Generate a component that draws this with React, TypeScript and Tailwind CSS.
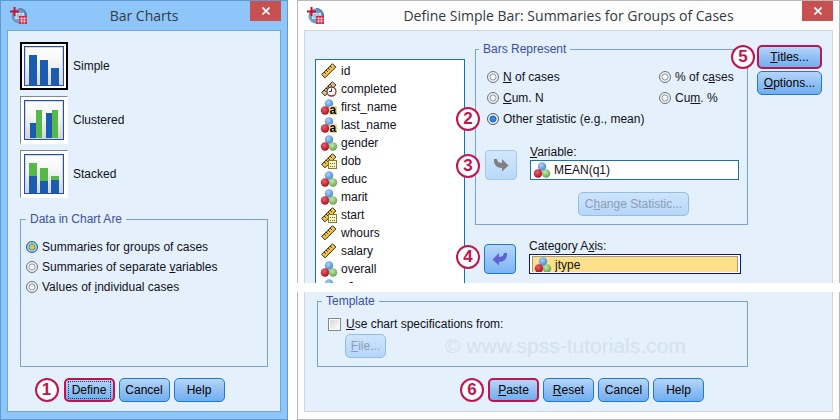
import React from 'react';
import { clsx } from 'clsx';

type VarKind = 'scale' | 'time' | 'string' | 'nominal' | 'date';

const variables: { name: string; kind: VarKind }[] = [
  { name: 'id', kind: 'scale' },
  { name: 'completed', kind: 'time' },
  { name: 'first_name', kind: 'string' },
  { name: 'last_name', kind: 'string' },
  { name: 'gender', kind: 'nominal' },
  { name: 'dob', kind: 'date' },
  { name: 'educ', kind: 'nominal' },
  { name: 'marit', kind: 'nominal' },
  { name: 'start', kind: 'date' },
  { name: 'whours', kind: 'scale' },
  { name: 'salary', kind: 'scale' },
  { name: 'overall', kind: 'nominal' },
  { name: 'q2', kind: 'nominal' },
];

function Ruler({ pale }: { pale?: boolean }) {
  return (
    <g>
      <path d="M.7 11.500 L11.500 .7 L14.800 4 L4 14.800 Z" fill={pale ? '#cfd08a' : '#f5c443'} stroke="#2e2817" strokeWidth="1" />
      <path d="M3 9l1.800 1.800M5 7l1.800 1.800M7 5l1.800 1.800M9 3l1.800 1.800" stroke="#2e2817" strokeWidth="1" />
    </g>
  );
}

function VarIcon({ kind }: { kind: VarKind }) {
  const balls = kind === 'nominal' || kind === 'string';
  return (
    <svg width="16" height="16" viewBox="0 0 16 16" className="shrink-0 overflow-visible" aria-hidden="true">
      <defs>
        <radialGradient id="ballBlue" cx="40%" cy="35%" r="65%">
          <stop offset="0" stopColor="#a9d3fb" />
          <stop offset="1" stopColor="#4a87cc" />
        </radialGradient>
        <radialGradient id="ballRed" cx="40%" cy="35%" r="65%">
          <stop offset="0" stopColor="#f0606c" />
          <stop offset="1" stopColor="#a80f22" />
        </radialGradient>
        <radialGradient id="ballGreen" cx="40%" cy="35%" r="65%">
          <stop offset="0" stopColor="#c4ecaa" />
          <stop offset="1" stopColor="#62a552" />
        </radialGradient>
      </defs>
      {!balls && <Ruler pale={kind === 'time'} />}
      {balls && (
        <g>
          <circle cx="8" cy="4.500" r="4.200" fill="url(#ballBlue)" />
          <circle cx="4" cy="11.500" r="4.200" fill="url(#ballRed)" />
          {kind === 'nominal' && <circle cx="12" cy="11.500" r="4.200" fill="url(#ballGreen)" />}
        </g>
      )}
      {kind === 'string' && (
        <g>
          <rect x="8.500" y="7" width="7.500" height="9" fill="#fbd77a" />
          <text x="8.500" y="15" fontSize="12" fontWeight="bold" fontFamily="Liberation Sans, Arial, sans-serif">a</text>
        </g>
      )}
      {kind === 'time' && (
        <g>
          <circle cx="10.500" cy="10.500" r="4.500" fill="#fff" stroke="#8f2f35" strokeWidth="1.300" />
          <path d="M10.500 7.500v3h-2.500" fill="none" stroke="#333" />
        </g>
      )}
      {kind === 'date' && (
        <g>
          <rect x="7.500" y="7.500" width="8" height="8" fill="#fff7b8" stroke="#8a7a3a" />
          <path d="M9 10.500h5M9 13.500h5" stroke="#6e6230" strokeDasharray="1 1" />
        </g>
      )}
    </svg>
  );
}

function AppIcon() {
  return (
    <svg width="18" height="18" viewBox="0 0 18 18" aria-hidden="true">
      <circle cx="9" cy="9" r="7.500" fill="#6d9cc9" />
      <path d="M9 1.500a7.500 7.500 0 0 1 7.500 7.500" fill="none" stroke="#3f6f9f" strokeWidth="1.200" />
      <path d="M5 6h9v6H5z" fill="#e8f1f8" />
      <path d="M5 8h9M5 10h9M8 6v6M11 6v6" stroke="#7fa3c4" strokeWidth=".8" />
      <path d="M4.500 0v9M0 4.500h9" stroke="#c8102e" strokeWidth="2" />
      <rect x="9" y="9" width="8" height="8" fill="#d42a49" />
      <path d="M9.500 11.500h7M9.500 14h7M11.700 10v6.500M14.300 10v6.500" stroke="#fbd3da" strokeWidth=".8" />
    </svg>
  );
}

function ArrowIcon({ left, fill }: { left?: boolean; fill: string }) {
  return (
    <svg width="16" height="14" viewBox="0 0 16 14" aria-hidden="true">
      <path
        d="M1 1 H4 C4.500 4 6 5 9 5 V1 L15.500 7.500 L9 13.500 V10 C4 10 .5 7 1 1 Z"
        fill={fill}
        transform={left ? 'translate(16 0) scale(-1 1)' : undefined}
      />
    </svg>
  );
}

function ChartIcon({ bars }: { bars: { x: number; y: number; w: number; h: number; fill: string }[] }) {
  return (
    <svg width="40" height="40" viewBox="0 0 40 40" aria-hidden="true">
      <defs>
        <linearGradient id="chartBg" x1="0" y1="0" x2="0" y2="1">
          <stop offset="0" stopColor="#ffffff" />
          <stop offset=".4" stopColor="#f6f6f6" />
          <stop offset="1" stopColor="#cfd3d8" />
        </linearGradient>
      </defs>
      <rect x=".5" y=".5" width="39" height="39" fill="url(#chartBg)" stroke="#2b4fa0" />
      <rect x="1.500" y="1.500" width="37" height="37" fill="none" stroke="#c9d6f6" />
      {bars.map((b, i) => (
        <rect key={i} x={b.x} y={b.y} width={b.w} height={b.h} fill={b.fill} />
      ))}
    </svg>
  );
}

const BLUE = '#1c5cb0';
const GREEN = '#56b848';

const chartTypes = [
  {
    label: 'Simple',
    bars: [
      { x: 5, y: 9, w: 8, h: 30, fill: BLUE },
      { x: 16, y: 14, w: 8, h: 25, fill: BLUE },
      { x: 27, y: 22, w: 8, h: 17, fill: BLUE },
    ],
  },
  {
    label: 'Clustered',
    bars: [
      { x: 6, y: 23, w: 6, h: 15, fill: BLUE },
      { x: 12, y: 10, w: 6, h: 28, fill: GREEN },
      { x: 22, y: 13, w: 6, h: 25, fill: BLUE },
      { x: 28, y: 10, w: 6, h: 28, fill: GREEN },
    ],
  },
  {
    label: 'Stacked',
    bars: [
      { x: 5, y: 9, w: 8, h: 13, fill: GREEN },
      { x: 5, y: 22, w: 8, h: 17, fill: BLUE },
      { x: 16, y: 14, w: 8, h: 13, fill: GREEN },
      { x: 16, y: 27, w: 8, h: 12, fill: BLUE },
      { x: 27, y: 22, w: 8, h: 4, fill: GREEN },
      { x: 27, y: 26, w: 8, h: 13, fill: BLUE },
    ],
  },
];

function Badge({ n, className }: { n: number; className: string }) {
  return (
    <span
      className={clsx(
        'absolute flex size-6 items-center justify-center rounded-full border-2 border-[#c2134f] bg-white text-[17px] leading-5 font-bold text-[#c2134f]',
        className
      )}
    >
      {n}
    </span>
  );
}

function Button({ children, marked, className, disabled }: { children: React.ReactNode; marked?: boolean; className?: string; disabled?: boolean }) {
  return (
    <button
      type="button"
      disabled={disabled}
      className={clsx(
        'flex h-6 items-center justify-center rounded-[5px] whitespace-nowrap',
        disabled
          ? 'border border-[#93bde6] bg-linear-to-b from-[#cfe4fb] to-[#b5d7fa] text-[#8c9eb4]'
          : 'bg-linear-to-b from-[#b4d5fa] via-[#93c0f3] to-[#6eaef0] text-black',
        !disabled && (marked ? 'border-2 border-[#c2134f]' : 'border border-[#2279cc]'),
        className
      )}
    >
      {children}
    </button>
  );
}

function Radio({ name, children, checked, gold }: { name: string; children: React.ReactNode; checked?: boolean; gold?: boolean }) {
  return (
    <label className="flex items-center gap-1 whitespace-nowrap">
      <input
        type="radio"
        name={name}
        defaultChecked={checked}
        className={clsx(
          'size-3 shrink-0 appearance-none rounded-full border',
          !checked && 'border-[#6f757d] bg-[radial-gradient(circle,#f7fafd_2px,#8d949c_3px,#ffffff_4px,#dfe6ee_5px)]',
          checked && gold && 'border-[#1f5f9f] bg-[radial-gradient(circle,#d8cf4a_2px,#5b8a7a_3px,#b9dcf8_4px,#8fbfe8_5px)]',
          checked && !gold && 'border-[#4d5a68] bg-[radial-gradient(circle,#2f86e4_2px,#1c62b4_3px,#ffffff_4px,#dfe6ee_5px)]'
        )}
      />
      <span>{children}</span>
    </label>
  );
}

function TitleBar({ title }: { title: string }) {
  return (
    <header className="grid h-[29px] grid-cols-[31px_1fr_31px] px-[6px]">
      <span className="flex items-center pl-[3px]">
        <AppIcon />
      </span>
      <h1 className="text-center font-['Open_Sans','Noto_Sans',sans-serif] text-[14px] leading-[29px] whitespace-nowrap text-[#333a42]">{title}</h1>
      <button type="button" aria-label="Close" className="flex h-5 items-center justify-center bg-[#c75050]">
        <svg width="8" height="8" viewBox="0 0 8 8" aria-hidden="true">
          <path d="M.5.5l7 7M7.500.5l-7 7" stroke="#fff" strokeWidth="1.700" />
        </svg>
      </button>
    </header>
  );
}

function BarChartsDialog() {
  return (
    <section className="flex w-[288px] shrink-0 flex-col border border-[#5f9bd3] bg-[#8fc6fa] pb-[7px]">
      <TitleBar title="Bar Charts" />
      <div className="mx-[6px] flex-1 border border-[#6fa6dc] bg-[#e4f0fc] px-3 pt-[11px] pb-[9px]">
        <div className="flex flex-col gap-[6px]">
          {chartTypes.map((c, i) => (
            <button key={c.label} type="button" className="flex items-center gap-[5px] self-start">
              <span
                className={clsx(
                  'flex size-12 items-center justify-center bg-white',
                  i === 0 ? 'border-2 border-black' : 'border border-t-[#808890] border-r-white border-b-white border-l-[#808890]'
                )}
              >
                <ChartIcon bars={c.bars} />
              </span>
              {c.label}
            </button>
          ))}
        </div>

        <fieldset className="mt-[13px] min-h-[156px] border border-[#7ba3cf] pl-[5px]">
          <legend className="px-1 text-[#3d4fa3]">Data in Chart Are</legend>
          <div className="flex flex-col gap-1 pt-3">
            <Radio name="data" checked gold>Summaries for <u>g</u>roups of cases</Radio>
            <Radio name="data">Summaries of separate <u>v</u>ariables</Radio>
            <Radio name="data">Values of <u>i</u>ndividual cases</Radio>
          </div>
        </fieldset>

        <div className="mt-[11px] flex justify-center">
          <div className="relative flex gap-1">
            <Badge n={1} className="-left-[29px] top-0" />
            <Button marked className="w-[51px]">
              <span className="flex h-[18px] w-[43px] items-center justify-center border border-dotted border-[#1c3660]">Define</span>
            </Button>
            <Button className="w-[51px]">Cancel</Button>
            <Button className="w-[51px]">Help</Button>
          </div>
        </div>
      </div>
    </section>
  );
}

function DefineBarDialog() {
  return (
    <section className="flex min-w-0 flex-1 flex-col">
      {/* upper part of the dialog */}
      <div className="border border-b-0 border-[#b9b9b9] bg-[#fdfdfd]">
        <TitleBar title="Define Simple Bar: Summaries for Groups of Cases" />
        <div className="mx-[6px] flex border border-b-0 border-[#d3d6da] bg-[#e4f0fc] px-[10px]">
          <ul className="mt-7 h-[224px] w-[150px] shrink-0 overflow-hidden border border-b-0 border-[#1a6fb5] bg-white pt-[2px] pl-[5px]">
            {variables.map((v) => (
              <li key={v.name} className="flex h-[18px] items-center gap-1">
                <VarIcon kind={v.kind} />
                {v.name}
              </li>
            ))}
          </ul>

          <div className="ml-[10px] min-w-0 flex-1 pt-[10px] pb-2">
            <fieldset className="border border-[#7ba3cf] pr-2 pb-2 pl-[9px]">
              <legend className="-ml-[6px] px-1 text-[#3d4fa3]">Bars Represent</legend>
              <div className="grid grid-cols-[172px_1fr] gap-y-[5px] pt-3 pl-[2px]">
                <Radio name="stat"><u>N</u> of cases</Radio>
                <Radio name="stat">% of c<u>a</u>ses</Radio>
                <Radio name="stat"><u>C</u>um. N</Radio>
                <Radio name="stat">Cu<u>m</u>. %</Radio>
                <div className="relative">
                  <Badge n={2} className="-left-[31px] -top-1" />
                  <Radio name="stat" checked>Other <u>s</u>tatistic (e.g., mean)</Radio>
                </div>
              </div>

              <div className="relative mt-[17px] flex items-end gap-[13px]">
                <Badge n={3} className="-left-[29px] top-[10px]" />
                <button type="button" disabled aria-label="Move to Variable" className="flex h-[30px] w-8 shrink-0 items-center justify-center rounded-[4px] border border-[#a3c8ec] bg-linear-to-b from-[#d3e7fc] to-[#b9d9fa]">
                  <ArrowIcon fill="#808080" />
                </button>
                <div className="min-w-0 flex-1">
                  <label htmlFor="variable" className="block"><u>V</u>ariable:</label>
                  <div className="flex h-5 items-center gap-1 border border-[#1a6fb5] bg-white pl-[3px]">
                    <VarIcon kind="nominal" />
                    <input id="variable" readOnly value="MEAN(q1)" className="min-w-0 flex-1 bg-transparent outline-none" />
                  </div>
                </div>
              </div>

              <div className="mt-3 flex justify-center pl-[43px]">
                <Button disabled className="w-[111px]">C<u>h</u>ange Statistic...</Button>
              </div>
            </fieldset>

            <div className="relative mt-[13px] flex items-end gap-[13px] pr-[7px] pl-[9px]">
              <Badge n={4} className="-left-[19px] top-[7px]" />
              <button type="button" aria-label="Remove from Category Axis" className="flex h-[30px] w-8 shrink-0 items-center justify-center rounded-[4px] border border-[#2279cc] bg-linear-to-b from-[#b4d5fa] to-[#7ab5f3]">
                <ArrowIcon left fill="#5f62cf" />
              </button>
              <div className="min-w-0 flex-1">
                <label htmlFor="axis" className="block">Category A<u>x</u>is:</label>
                <div className="h-5 border border-[#14148c] bg-white p-px pr-[2px] pl-[2px]">
                  <div className="flex h-4 items-center gap-1 overflow-hidden border border-b-0 border-[#a39a86] bg-[#ffe08a] pl-[2px]">
                    <VarIcon kind="nominal" />
                    <input id="axis" readOnly value="jtype" className="min-w-0 flex-1 bg-transparent outline-none" />
                  </div>
                </div>
              </div>
            </div>
          </div>

          <div className="relative ml-[9px] flex w-[65px] shrink-0 flex-col gap-[2px] pt-[14px]">
            <Badge n={5} className="-left-[26px] top-[14px]" />
            <Button marked><u>T</u>itles...</Button>
            <Button><u>O</u>ptions...</Button>
          </div>
        </div>
      </div>

      {/* lower part, after the cut */}
      <div className="mt-[9px] flex-1 border border-t-0 border-[#b9b9b9] bg-[#fdfdfd] pb-[7px]">
        <div className="mx-[6px] border border-t-0 border-[#d3d6da] bg-[#e4f0fc] pt-px pb-[9px] pl-3">
          <fieldset className="mr-[84px] border border-[#7ba3cf] pb-2 pl-[10px]">
            <legend className="-ml-[6px] px-1 text-[#3d4fa3]">Template</legend>
            <label className="mt-[7px] flex items-center gap-[5px]">
              <input type="checkbox" className="size-[13px] appearance-none border border-[#7f8790] bg-linear-to-br from-[#d3d8d6] to-white shadow-[inset_0_0_0_1px_#fff]" />
              <span><u>U</u>se chart specifications from:</span>
            </label>
            <div className="mt-[2px] flex items-center pl-[17px]">
              <Button disabled className="w-[41px]"><u>F</u>ile...</Button>
              <span className="ml-[59px] text-[21px] leading-6 whitespace-nowrap text-[#d3e1ee]">© www.spss-tutorials.com</span>
            </div>
          </fieldset>

          <div className="mt-[11px] flex justify-center pr-[13px] pl-14">
            <div className="relative flex gap-1">
              <Badge n={6} className="-left-7 top-0" />
              <Button marked className="w-[51px]"><u>P</u>aste</Button>
              <Button className="w-[51px]"><u>R</u>eset</Button>
              <Button className="w-[51px]">Cancel</Button>
              <Button className="w-[51px]">Help</Button>
            </div>
          </div>
        </div>
      </div>
    </section>
  );
}

export default function App() {
  return (
    <main className="flex gap-[9px] bg-white font-['Liberation_Sans',Arial,sans-serif] text-[12px] leading-4 text-[#101018]">
      <BarChartsDialog />
      <DefineBarDialog />
    </main>
  );
}
